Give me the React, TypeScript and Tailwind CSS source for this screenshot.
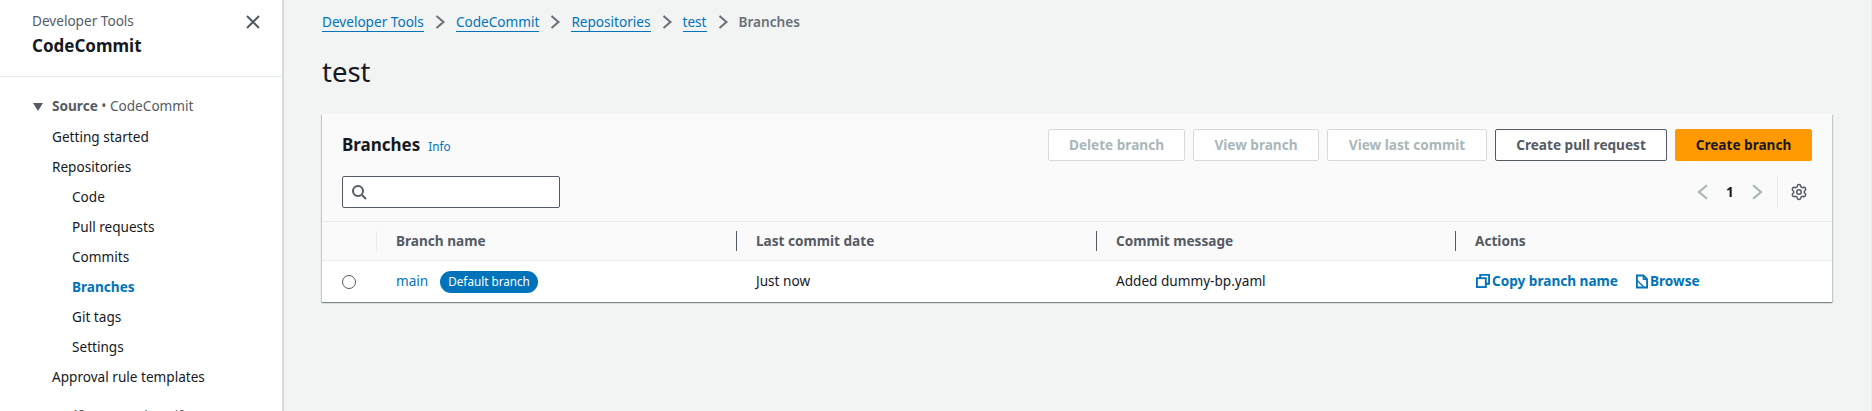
import { Settings } from "lucide-react";

const sideItems = [
  { label: "Getting started", depth: 0 },
  { label: "Repositories", depth: 0 },
  { label: "Code", depth: 1 },
  { label: "Pull requests", depth: 1 },
  { label: "Commits", depth: 1 },
  { label: "Branches", depth: 1, active: true },
  { label: "Git tags", depth: 1 },
  { label: "Settings", depth: 1 },
  { label: "Approval rule templates", depth: 0 },
];

const crumbs = ["Developer Tools", "CodeCommit", "Repositories", "test"];

const columns = ["Branch name", "Last commit date", "Commit message", "Actions"];

const tableGrid = "grid grid-cols-[54px_360px_360px_359px_1fr]";

function Chevron({ left = false, className = "" }: { left?: boolean; className?: string }) {
  return (
    <svg viewBox="0 0 16 16" className={className} fill="none" stroke="currentColor" strokeWidth="2">
      <path d={left ? "M11.500 2l-7 6 7 6" : "M4.500 2l7 6-7 6"} />
    </svg>
  );
}

function Sidebar() {
  return (
    <aside className="w-[284px] shrink-0 border-r-2 border-[#d5dbdb] bg-white">
      <div className="relative h-[77px] border-b border-[#eaeded] pl-8 pt-[11px]">
        <div className="text-[13.6px] leading-5 text-[#545b64]">Developer Tools</div>
        <div className="mt-[3px] text-[17px] font-bold leading-6 text-[#16191f]">CodeCommit</div>
        <svg viewBox="0 0 16 16" className="absolute left-[245px] top-[14px] h-4 w-4 text-[#545b64]" fill="none" stroke="currentColor" strokeWidth="2">
          <path d="M2 2l12 12M14 2 2 14" />
        </svg>
      </div>
      <div className="mt-[15px] flex h-[28px] items-center pl-[33px] text-[13.6px] text-[#545b64]">
        <svg viewBox="0 0 10 8" className="mr-[9px] mt-[2px] h-2 w-[10px] fill-current">
          <path d="M0 0h10L5 8z" />
        </svg>
        <span className="font-bold">Source</span>
        <span>&nbsp;• CodeCommit</span>
      </div>
      <ul className="mt-[2px]">
        {sideItems.map((item) => (
          <li
            key={item.label}
            className={`flex h-[30px] items-center text-[13.6px] ${item.depth ? "pl-[72px]" : "pl-[52px]"} ${
              item.active ? "font-bold text-[#0073bb]" : "text-[#16191f]"
            }`}
          >
            {item.label}
          </li>
        ))}
      </ul>
      <div className="mt-[10px] flex h-[28px] items-center pl-[52px] text-[13.6px] text-[#545b64]">
        <span className="font-bold">Artifacts</span>
        <span>&nbsp;• CodeArtifact</span>
      </div>
    </aside>
  );
}

function ToolbarButton({ label, width, kind }: { label: string; width: string; kind: "disabled" | "normal" | "primary" }) {
  const look = {
    disabled: "border-[#d5dbdb] bg-white text-[#aab7b8]",
    normal: "border-[#545b64] bg-white text-[#545b64]",
    primary: "border-[#ff9900] bg-[#ff9900] text-[#16191f]",
  }[kind];
  return (
    <button type="button" className={`flex h-8 items-center justify-center rounded-[2px] border text-[13.6px] font-bold ${width} ${look}`}>
      {label}
    </button>
  );
}

function Card() {
  return (
    <section className="mt-[24px] bg-white shadow-[0_1px_1px_0_rgba(0,28,36,0.3),1px_1px_1px_0_rgba(0,28,36,0.15),-1px_1px_1px_0_rgba(0,28,36,0.15)]">
      <div className="h-[108px] border-b border-[#eaeded] bg-[#fafafa] pl-5 pr-5 pt-[15px]">
        <div className="flex h-8 items-center justify-between">
          <div className="flex items-baseline">
            <h2 className="text-[17px] font-bold text-[#16191f]">Branches</h2>
            <span className="ml-2 text-[11.7px] text-[#0073bb]">Info</span>
          </div>
          <div className="flex gap-2">
            <ToolbarButton label="Delete branch" width="w-[137px]" kind="disabled" />
            <ToolbarButton label="View branch" width="w-[126px]" kind="disabled" />
            <ToolbarButton label="View last commit" width="w-[160px]" kind="disabled" />
            <ToolbarButton label="Create pull request" width="w-[172px]" kind="normal" />
            <ToolbarButton label="Create branch" width="w-[137px]" kind="primary" />
          </div>
        </div>
        <div className="mt-[15px] flex items-center justify-between">
          <div className="flex h-8 w-[218px] items-center rounded-[2px] border border-[#545b64] bg-white pl-2">
            <svg viewBox="0 0 16 16" className="h-4 w-4 text-[#545b64]" fill="none" stroke="currentColor" strokeWidth="2">
              <circle cx="7" cy="7" r="5" />
              <path d="m11 11 4 4" />
            </svg>
          </div>
          <div className="flex items-center">
            <Chevron left className="h-[18px] w-[18px] text-[#aab7b8]" />
            <span className="mx-3 w-3 text-center text-[13.6px] font-bold text-[#16191f]">1</span>
            <Chevron className="h-[18px] w-[18px] text-[#aab7b8]" />
            <div className="ml-[11px] h-8 border-l border-[#eaeded]" />
            <Settings size={18} strokeWidth={2} className="ml-3 mr-1 text-[#545b64]" />
          </div>
        </div>
      </div>
      <div className={`${tableGrid} h-[39px] items-center border-b border-[#eaeded] bg-[#fafafa] text-[13.6px] font-bold text-[#545b64]`}>
        <div />
        {columns.map((col, i) => (
          <div key={col} className={`flex h-5 items-center border-l pl-[19px] ${i === 0 ? "border-[#eaeded]" : "border-[#545b64]"}`}>
            {col}
          </div>
        ))}
      </div>
      <div className={`${tableGrid} h-[41px] items-center text-[13.6px] text-[#16191f]`}>
        <div className="pl-5">
          <div className="h-[14px] w-[14px] rounded-full border border-[#545b64] bg-white" />
        </div>
        <div className="flex items-center pl-5">
          <span className="text-[#0073bb]">main</span>
          <span className="ml-3 flex h-[22px] items-center rounded-full bg-[#0073bb] px-2 text-[11.7px] text-white">Default branch</span>
        </div>
        <div className="pl-5">Just now</div>
        <div className="pl-5">Added dummy-bp.yaml</div>
        <div className="flex items-center pl-[21px] font-bold text-[#0073bb]">
          <svg viewBox="0 0 15 15" className="mr-[2px] h-[14px] w-[14px]" fill="none" stroke="currentColor" strokeWidth="2">
            <path d="M4.500 4.500V1h9.500v9.500h-3.500" />
            <rect x="1" y="4.500" width="9.500" height="9.500" />
          </svg>
          <span>Copy branch name</span>
          <svg viewBox="0 0 13 15" className="ml-[18px] mr-[2px] h-[15px] w-[12px]" fill="none" stroke="currentColor" strokeWidth="2">
            <path d="M1 1h7l4 4v9H1z" />
            <path d="M8 1v4h4M1 6l8 8" strokeWidth="1.500" />
          </svg>
          <span>Browse</span>
        </div>
      </div>
    </section>
  );
}

export default function App() {
  return (
    <div className="flex h-[411px] overflow-hidden bg-[#f2f3f3] font-['Noto_Sans',sans-serif]">
      <Sidebar />
      <main className="flex-1 border-r border-[#eaeded] pl-[38px] pr-[39px]">
        <nav className="mt-[12px] flex h-5 items-center text-[13.6px]">
          {crumbs.map((crumb) => (
            <span key={crumb} className="flex items-center">
              <span className="border-b border-[#0073bb] leading-[18px] text-[#0073bb]">{crumb}</span>
              <Chevron className="mx-2 h-4 w-4 text-[#687078]" />
            </span>
          ))}
          <span className="font-semibold text-[#687078]">Branches</span>
        </nav>
        <h1 className="mt-[22px] text-[27.5px] leading-9 text-[#16191f]">test</h1>
        <Card />
      </main>
    </div>
  );
}
